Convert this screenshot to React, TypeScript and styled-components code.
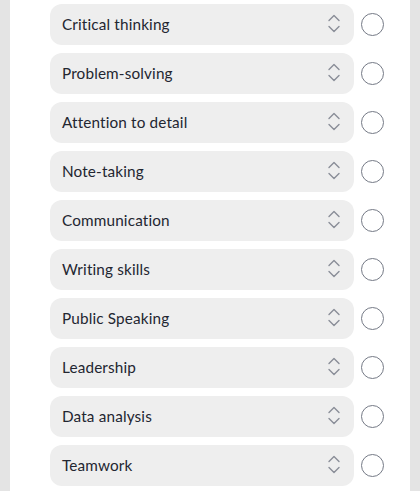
import styled, { createGlobalStyle } from 'styled-components';

const GlobalStyle = createGlobalStyle`
  html, body {
    margin: 0;
    padding: 0;
    background: #e4e4e4;
  }
  * {
    box-sizing: border-box;
  }
`;

const Page = styled.div`
  width: 420px;
  height: 491px;
  padding: 0 10px;
  background: #e4e4e4;
  overflow: hidden;
`;

const Panel = styled.div`
  height: 100%;
  background: #ffffff;
  padding: 4px 0 0 40px;
  display: flex;
  flex-direction: column;
  gap: 8px;
`;

const Row = styled.div`
  display: flex;
  align-items: center;
  gap: 7px;
`;

const SelectBox = styled.div`
  width: 304px;
  height: 41px;
  border-radius: 12px;
  background: #eeeeee;
  display: flex;
  align-items: center;
  justify-content: space-between;
  padding: 0 13px 1px 12px;
`;

const Label = styled.span`
  font-family: Lato, 'Noto Sans', sans-serif;
  font-size: 15.3px;
  color: #232631;
  letter-spacing: 0.15px;
`;

const Radio = styled.span`
  width: 23px;
  height: 23px;
  border-radius: 50%;
  border: 1.5px solid #757a86;
  flex-shrink: 0;
`;

const Chevrons = () => (
  <svg width="14" height="20" viewBox="0 0 14 20" fill="none">
    <path d="M2 6.5 L7 1.5 L12 6.5" stroke="#8a8e98" strokeWidth="1.4" strokeLinecap="round" strokeLinejoin="round" />
    <path d="M2 12.5 L7 17.5 L12 12.5" stroke="#8a8e98" strokeWidth="1.4" strokeLinecap="round" strokeLinejoin="round" />
  </svg>
);

const skills = [
  'Critical thinking',
  'Problem-solving',
  'Attention to detail',
  'Note-taking',
  'Communication',
  'Writing skills',
  'Public Speaking',
  'Leadership',
  'Data analysis',
  'Teamwork',
];

const App = () => {
  return (
    <>
      <GlobalStyle />
      <Page>
        <Panel>
          {skills.map(skill => (
            <Row key={skill}>
              <SelectBox>
                <Label>{skill}</Label>
                <Chevrons />
              </SelectBox>
              <Radio />
            </Row>
          ))}
        </Panel>
      </Page>
    </>
  );
};

export default App;
